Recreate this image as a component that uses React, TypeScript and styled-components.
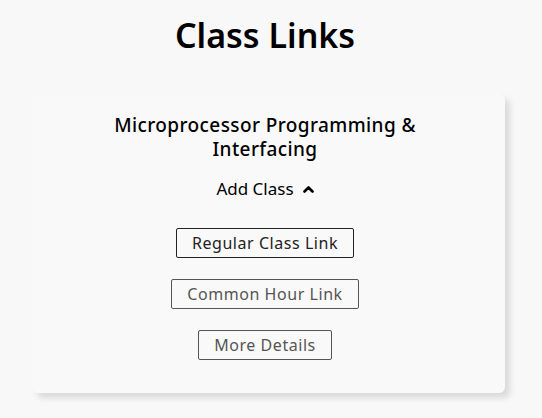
import React from 'react'
import styled, { createGlobalStyle } from 'styled-components'

const GlobalStyle = createGlobalStyle`
  body {
    margin: 0;
    background: #f8f8f8;
    font-family: 'Noto Sans', 'Open Sans', sans-serif;
    color: #111111;
  }
`

const PageWarp = styled.div`
  width: 542px;
  height: 418px;
  overflow: hidden;
  display: flex;
  flex-direction: column;
`

const Title = styled.h1`
  margin: 14px 12px 0 0;
  font-size: 34px;
  line-height: 42px;
  font-weight: 600;
  text-align: center;
  color: #000000;
`

const Card = styled.div`
  width: 473px;
  box-sizing: border-box;
  margin: 38px 0 0 32px;
  padding: 19px 27px 33px 20px;
  background: #f9f9f9;
  border-radius: 6px;
  box-shadow: 5px 5px 6px rgba(0, 0, 0, 0.12);
  display: flex;
  flex-direction: column;
  align-items: center;
`

const ClassName = styled.div`
  font-size: 19px;
  line-height: 24px;
  font-weight: 500;
  letter-spacing: 0.4px;
  text-align: center;
  color: #000000;
  max-width: 320px;
`

const Toggle = styled.div`
  margin-top: 17px;
  display: flex;
  align-items: center;
  gap: 9px;
  font-size: 17px;
  line-height: 22px;
  color: #000000;
  cursor: pointer;
`

const LinkList = styled.div`
  margin-top: 28px;
  display: flex;
  flex-direction: column;
  align-items: center;
  gap: 21px;
`

const LinkButton = styled.a<{ muted?: boolean }>`
  box-sizing: border-box;
  height: 30px;
  padding: 0 15px;
  display: flex;
  align-items: center;
  border: 1px solid ${p => (p.muted ? '#555555' : '#222222')};
  border-radius: 2px;
  font-size: 16px;
  letter-spacing: 0.55px;
  color: ${p => (p.muted ? '#555555' : '#222222')};
  text-decoration: none;
  cursor: pointer;
`

const Chevron = () => (
  <svg width="11" height="8" viewBox="0 0 11 8">
    <polyline points="1.5,6.5 5.5,2.5 9.5,6.5" fill="none" stroke="#000" strokeWidth="2.6" strokeLinecap="round" strokeLinejoin="round" />
  </svg>
)

const App: React.FunctionComponent = () => {
  return (
    <>
      <GlobalStyle />
      <PageWarp>
        <Title>Class Links</Title>
        <Card>
          <ClassName>Microprocessor Programming &amp; Interfacing</ClassName>
          <Toggle>
            Add Class
            <Chevron />
          </Toggle>
          <LinkList>
            <LinkButton>Regular Class Link</LinkButton>
            <LinkButton muted>Common Hour Link</LinkButton>
            <LinkButton muted>More Details</LinkButton>
          </LinkList>
        </Card>
      </PageWarp>
    </>
  )
}

export default App
